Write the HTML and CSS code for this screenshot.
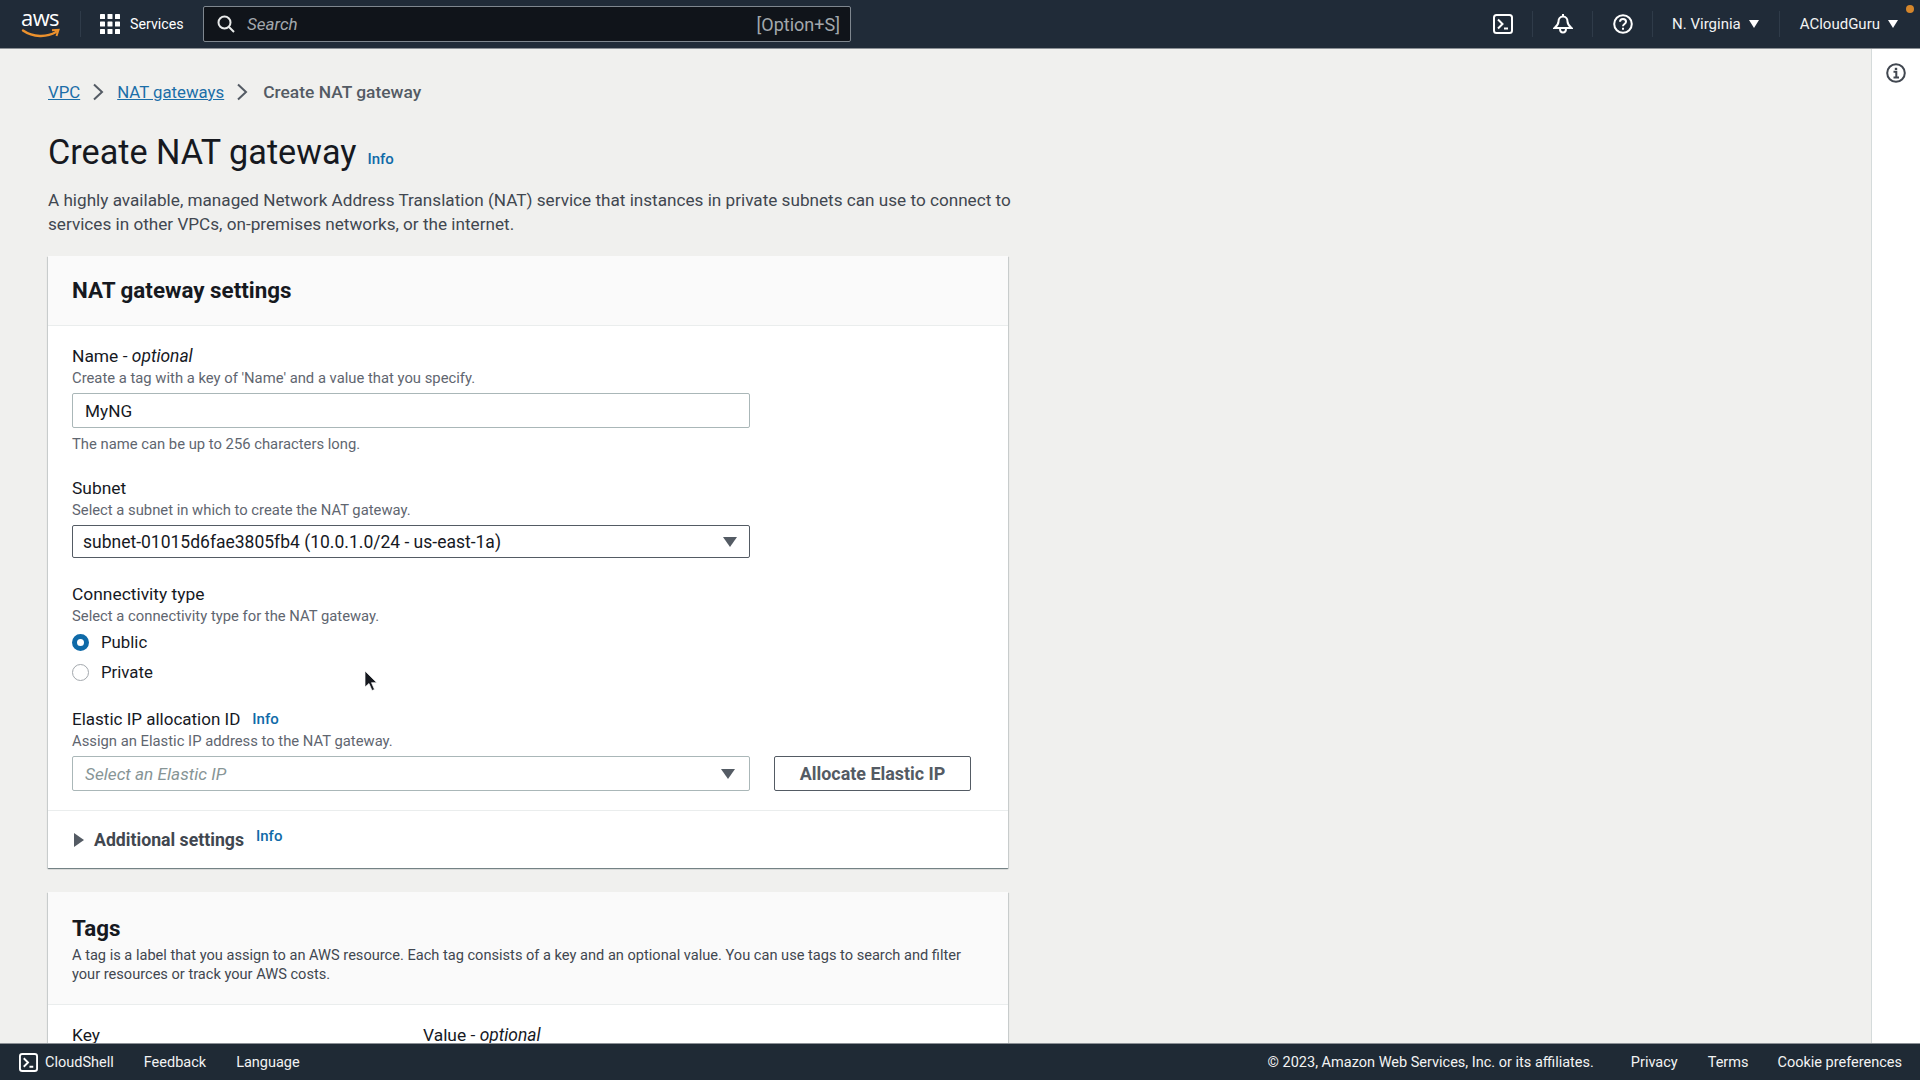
FILE: index.html
```html
<!DOCTYPE html>
<html lang="en">
<head>
<meta charset="utf-8">
<title>Create NAT gateway</title>
<link rel="stylesheet" href="styles.css">
</head>
<body>
<header class="topbar">
  <div class="logo"><span class="logo-text">aws</span>
    <svg class="logo-smile" width="40" height="11" viewBox="0 0 40 11"><path d="M2 2.5C12 9.5 26 9.5 35 4" fill="none" stroke="#ec912d" stroke-width="2.4" stroke-linecap="round"/><path d="M31 2.2L37.5 1.8L35.5 8" fill="none" stroke="#ec912d" stroke-width="2"/></svg>
  </div>
  <span class="sep sep-logo"></span>
  <svg class="grid-icon" width="20" height="20" viewBox="0 0 20 20" fill="#fff"><rect width="5" height="5" rx=".6"/><rect x="7.5" width="5" height="5" rx=".6"/><rect x="15" width="5" height="5" rx=".6"/><rect y="7.5" width="5" height="5" rx=".6"/><rect x="7.5" y="7.5" width="5" height="5" rx=".6"/><rect x="15" y="7.5" width="5" height="5" rx=".6"/><rect y="15" width="5" height="5" rx=".6"/><rect x="7.5" y="15" width="5" height="5" rx=".6"/><rect x="15" y="15" width="5" height="5" rx=".6"/></svg>
  <span class="services">Services</span>
  <div class="search">
    <svg width="18" height="18" viewBox="0 0 18 18" fill="none" stroke="#e8eaea" stroke-width="2"><circle cx="7.5" cy="7.5" r="6"/><path d="M12 12l5 5"/></svg>
    <span class="search-text">Search</span>
    <span class="search-key">[Option+S]</span>
  </div>
  <div class="top-right">
    <svg class="top-icon" width="20" height="20" viewBox="0 0 20 20" fill="none" stroke="#fff" stroke-width="2"><rect x="1" y="1" width="18" height="18" rx="2.5"/><path d="M5 5.5l4.500 4.500L5 14.500M11 14.500h4"/></svg>
    <span class="sep"></span>
    <svg class="top-icon" width="20" height="20" viewBox="0 0 20 20" fill="none" stroke="#fff" stroke-width="2"><path d="M10 2.500c-3 0-4.500 2.500-4.500 5 0 3-1.800 4.500-4 6.500h17c-2.200-2-4-3.500-4-6.500 0-2.500-1.500-5-4.500-5z"/><path d="M7 14.500c0 2.400 1.300 4 3 4s3-1.600 3-4M10 0v2.500"/></svg>
    <span class="sep"></span>
    <svg class="top-icon" width="20" height="20" viewBox="0 0 20 20" fill="none" stroke="#fff" stroke-width="2"><circle cx="10" cy="10" r="8.800"/><path d="M7 7.800C7 6 8.300 5 10 5s3 1.100 3 2.700c0 2.300-3 2.300-3 4.600"/><path d="M10 13.800v2"/></svg>
    <span class="sep"></span>
    <span class="menu region">N. Virginia<i class="caret"></i></span>
    <span class="sep"></span>
    <span class="menu account">ACloudGuru<i class="caret"></i></span>
  </div>
  <span class="notice-dot"></span>
</header>

<div class="middle">
  <main class="main">
    <nav class="crumbs">
      <a class="link">VPC</a>
      <svg class="chev" width="12" height="18" viewBox="0 0 12 18" fill="none" stroke="#545b64" stroke-width="2"><path d="M2 1.500l8 7.500-8 7.500"/></svg>
      <a class="link">NAT gateways</a>
      <svg class="chev chev-last" width="12" height="18" viewBox="0 0 12 18" fill="none" stroke="#545b64" stroke-width="2"><path d="M2 1.500l8 7.500-8 7.500"/></svg>
      <span class="crumb-current">Create NAT gateway</span>
    </nav>
    <div class="title-row"><h1>Create NAT gateway</h1><span class="info info-title">Info</span></div>
    <p class="page-desc">A highly available, managed Network Address Translation (NAT) service that instances in private subnets can use to connect to services in other VPCs, on-premises networks, or the internet.</p>

    <section class="card">
      <div class="card-head head-one"><h2>NAT gateway settings</h2></div>
      <div class="card-body">
        <div class="label">Name - <em>optional</em></div>
        <div class="desc">Create a tag with a key of 'Name' and a value that you specify.</div>
        <div class="input">MyNG</div>
        <div class="desc hint">The name can be up to 256 characters long.</div>

        <div class="label subnet-label">Subnet</div>
        <div class="desc">Select a subnet in which to create the NAT gateway.</div>
        <div class="select filled"><span>subnet-01015d6fae3805fb4 (10.0.1.0/24 - us-east-1a)</span><i class="tri"></i></div>

        <div class="label conn-label">Connectivity type</div>
        <div class="desc">Select a connectivity type for the NAT gateway.</div>
        <div class="radio-row first-radio"><span class="radio on"></span>Public</div>
        <div class="radio-row"><span class="radio"></span>Private</div>

        <div class="label eip-label">Elastic IP allocation ID<span class="info info-eip">Info</span></div>
        <div class="desc">Assign an Elastic IP address to the NAT gateway.</div>
        <div class="eip-row">
          <div class="select empty"><span>Select an Elastic IP</span><i class="tri"></i></div>
          <div class="button">Allocate Elastic IP</div>
        </div>
      </div>
      <div class="expander">
        <i class="tri-right"></i><span class="exp-label">Additional settings</span><span class="info info-exp">Info</span>
      </div>
    </section>

    <section class="card">
      <div class="card-head head-two">
        <h2>Tags</h2>
        <p class="tags-desc">A tag is a label that you assign to an AWS resource. Each tag consists of a key and an optional value. You can use tags to search and filter your resources or track your AWS costs.</p>
      </div>
      <div class="card-body tag-cols">
        <div class="label key-col">Key</div>
        <div class="label">Value - <em>optional</em></div>
      </div>
    </section>
  </main>
  <aside class="rail">
    <svg width="20" height="20" viewBox="0 0 20 20" fill="none" stroke="#414750" stroke-width="2"><circle cx="10" cy="10" r="8.800"/><path d="M7.500 8.800H10.300V14.500M7.500 14.500h5.500" /><path d="M10 4.800v2.200" stroke-width="2.400"/></svg>
  </aside>
</div>

<footer class="footer">
  <svg class="foot-icon" width="19" height="19" viewBox="0 0 20 20" fill="none" stroke="#fff" stroke-width="2"><rect x="1" y="1" width="18" height="18" rx="2.500"/><path d="M5 5.500l4.500 4.500L5 14.500M11 14.500h4"/></svg>
  <span class="foot-cloud">CloudShell</span>
  <span class="foot-item">Feedback</span>
  <span class="foot-item">Language</span>
  <span class="foot-copy">© 2023, Amazon Web Services, Inc. or its affiliates.</span>
  <span class="foot-link foot-privacy">Privacy</span>
  <span class="foot-link foot-terms">Terms</span>
  <span class="foot-link foot-cookie">Cookie preferences</span>
</footer>

<svg class="cursor" width="14" height="22" viewBox="0 0 14 22"><path d="M1 1v16l4-3.500 3 7 2.500-1-3-6.800h5.300z" fill="#16191f" stroke="#fff" stroke-width=".7"/></svg>
</body>
</html>
```

FILE: styles.css
```css
* { box-sizing: border-box; }
html, body { margin: 0; height: 100%; }
body {
  height: 100vh;
  overflow: hidden;
  display: flex;
  flex-direction: column;
  background: #f0f0ee;
  color: #16191f;
  font-family: Roboto, "Liberation Sans", sans-serif;
  font-size: 16px;
  position: relative;
}

/* top bar */
.topbar {
  flex: 0 0 49px;
  display: flex;
  align-items: center;
  position: relative;
  background: #202b38;
  border-bottom: 1px solid #8b9095;
  color: #fff;
  padding-left: 21px;
}
.logo { width: 38px; height: 34px; position: relative; flex: none; }
.logo-text {
  display: block;
  font-family: "Open Sans", sans-serif;
  font-size: 22px;
  line-height: 24px;
  letter-spacing: -.6px;
  color: #fff;
  text-align: center;
  margin-top: -2px;
}
.logo-smile { position: absolute; left: 0; top: 21px; }
.sep { width: 1px; height: 26px; background: #2f3b49; flex: none; }
.sep-logo { margin-left: 21px; margin-right: 19px; }
.grid-icon { flex: none; }
.services { margin-left: 10px; font-size: 14.200px; width: 73px; flex: none; }
.search {
  width: 648px;
  height: 36px;
  flex: none;
  display: flex;
  align-items: center;
  padding: 0 10px 0 13px;
  background: #10141a;
  border: 1px solid #7f878f;
  border-radius: 2px;
}
.search-text { margin-left: 12px; font-style: italic; color: #a3a8ad; font-size: 17px; }
.search-key { margin-left: auto; color: #a3a8ad; font-size: 18px; }
.top-right {
  margin-left: auto;
  display: flex;
  align-items: center;
  padding-right: 22px;
}
.top-icon { flex: none; margin: 0 19.500px; }
.menu { display: flex; align-items: center; font-size: 15px; color: #f2f3f3; }
.region { margin: 0 20px 0 19px; }
.account { margin-left: 20px; }
.caret {
  display: block;
  width: 0; height: 0;
  margin-left: 8px;
  border-left: 5px solid transparent;
  border-right: 5px solid transparent;
  border-top: 8px solid #fff;
}
.notice-dot {
  position: absolute;
  left: 1906px; top: 5px;
  width: 8px; height: 8px;
  border-radius: 50%;
  background: #d5862b;
}

/* middle */
.middle { flex: 1 1 0; min-height: 0; display: flex; }
.main { flex: 1 1 0; min-width: 0; overflow: hidden; padding: 32px 0 0 48px; }
.rail {
  flex: 0 0 49px;
  background: #fff;
  border-left: 1px solid #d5dbdb;
  padding: 14px 0 0 14px;
}

.crumbs { display: flex; align-items: center; height: 22px; font-size: 16.800px; line-height: 22px; }
.link { color: #1b6ea8; text-decoration: underline; }
.chev { margin: 0 13px 0 12px; }
.chev-last { margin-right: 15px; }
.crumb-current { color: #545b64; font-weight: 500; font-size: 17.400px; }

.title-row { display: flex; align-items: center; margin-top: 29px; height: 40px; }
h1 { margin: 0; font-weight: 400; font-size: 34.200px; line-height: 40px; color: #16191f; }
.info { color: #0f6aa8; font-weight: 500; font-size: 15px; }
.info-title { margin: 13px 0 0 11px; }
.page-desc { width: 970px; margin: 16px 0 20px; font-size: 17.150px; line-height: 24px; color: #414750; }

/* cards */
.card {
  width: 960px;
  background: #fff;
  margin-bottom: 24px;
  box-shadow: 0 1px 1px 0 rgba(0, 28, 36, .4), 1px 1px 1px 0 rgba(0, 28, 36, .1), -1px 1px 1px 0 rgba(0, 28, 36, .1);
}
.card-head { background: #fafafa; border-bottom: 1px solid #eaeded; padding: 0 24px; }
.head-one { height: 70px; padding-top: 22px; }
.head-two { height: 113px; padding-top: 24px; }
h2 { margin: 0; font-size: 22.400px; line-height: 24px; font-weight: 700; color: #16191f; }
.tags-desc { margin: 6px 0 0; font-size: 14.600px; line-height: 19px; color: #414750; }
.card-body { padding: 20px 24px 19px; border-bottom: 1px solid #eaeded; }
.label { font-size: 17.400px; line-height: 21px; padding-bottom: 1px; color: #16191f; }
.desc { font-size: 14.800px; line-height: 20px; color: #5f6670; }
.hint { margin-top: 6px; }
.subnet-label { margin-top: 24px; }
.conn-label { margin-top: 26px; }
.eip-label { margin-top: 22px; display: flex; align-items: center; font-size: 17px; }
.info-eip { margin-left: 12px; font-size: 15px; }

.input, .select {
  width: 678px;
  display: flex;
  align-items: center;
  background: #fff;
  border-radius: 2px;
}
.input { height: 35px; margin-top: 5px; padding-left: 12px; border: 1px solid #aab7b8; font-size: 17.200px; }
.select { position: relative; }
.filled { height: 33px; margin-top: 5px; padding-left: 10px; border: 1px solid #545b64; font-size: 17.500px; }
.empty { height: 35px; padding-left: 12px; border: 1px solid #aab7b8; font-style: italic; color: #879596; font-size: 17.200px; }
.tri {
  position: absolute;
  right: 14px; top: 50%;
  margin-top: -5px;
  width: 0; height: 0;
  border-left: 7px solid transparent;
  border-right: 7px solid transparent;
  border-top: 10px solid #545b64;
}
.filled .tri { right: 12px; }
.radio-row { display: flex; align-items: center; height: 30px; font-size: 16.800px; color: #16191f; }
.first-radio { margin-top: 1px; }
.radio { width: 17px; height: 17px; border: 1px solid #a3a8ad; border-radius: 50%; margin-right: 12px; flex: none; background: #fff; }
.radio.on { border: 5px solid #0f6aa8; }
.eip-row { display: flex; gap: 24px; margin-top: 5px; }
.button {
  width: 197px; height: 35px;
  display: flex; align-items: center; justify-content: center;
  border: 1px solid #545b64;
  border-radius: 2px;
  font-weight: 700;
  font-size: 17.900px;
  color: #545b64;
}
.expander { height: 57px; display: flex; align-items: center; padding-left: 26px; }
.tri-right {
  width: 0; height: 0;
  border-top: 7px solid transparent;
  border-bottom: 7px solid transparent;
  border-left: 10px solid #545b64;
  margin-right: 10px;
}
.exp-label { font-weight: 700; font-size: 17.700px; color: #414750; }
.info-exp { margin: -8px 0 0 12px; }
.tag-cols { display: flex; border-bottom: 0; }
.key-col { width: 351px; }

/* footer */
.footer {
  flex: 0 0 37px;
  display: flex;
  align-items: center;
  position: relative;
  z-index: 2;
  background: #1f2a35;
  border-top: 1px solid #8b9095;
  color: #f2f3f3;
  font-size: 14.500px;
  padding: 0 18px 0 19px;
}
.foot-icon { flex: none; }
.foot-cloud { margin-left: 7px; }
.foot-item { margin-left: 30px; }
.foot-copy { margin-left: auto; }
.foot-privacy { margin-left: 37px; }
.foot-terms { margin-left: 30px; }
.foot-cookie { margin-left: 29px; }

.cursor { position: absolute; left: 364px; top: 670px; }
```
